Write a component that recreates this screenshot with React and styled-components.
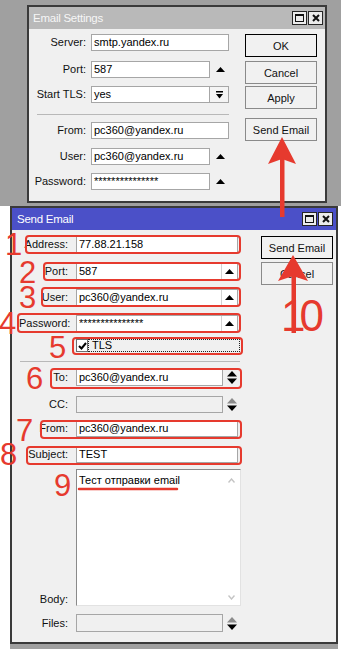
import React from "react";
import styled, { createGlobalStyle } from "styled-components";

const RED = "#e63a2e";

const GlobalStyle = createGlobalStyle`
  html, body { margin: 0; padding: 0; background: #ffffff; }
  body { font-family: "Liberation Sans", Arial, sans-serif; font-size: 11px; color: #000; }
`;

const Page = styled.div`
  position: relative;
  width: 341px;
  height: 649px;
  overflow: hidden;
  background: #ffffff;
  display: flex;
  flex-direction: column;
`;

const Desktop = styled.div`
  flex: none;
  height: 206px;
  box-sizing: border-box;
  background: #a0a0a0;
  padding: 5px 0 0 27px;
`;

const Window = styled.div`
  box-sizing: border-box;
  flex: none;
  width: ${(p) => p.$w}px;
  height: ${(p) => p.$h}px;
  margin-left: ${(p) => p.$ml || 0}px;
  border: 2px solid #3a3a3a;
  background: #f0f0f0;
  display: flex;
  flex-direction: column;
`;

const TitleBar = styled.div`
  flex: none;
  height: 22px;
  display: flex;
  align-items: center;
  padding: 0 ${(p) => p.$pr}px 0 ${(p) => p.$pl}px;
  background: ${(p) => (p.$active ? "#4b50c8" : "#b9b9b9")};
  color: ${(p) => (p.$active ? "#ffffff" : "#f6f6f6")};
  font-size: 11.5px;
  letter-spacing: -0.25px;
`;

const TitleText = styled.span`
  white-space: nowrap;
`;

const TitleButtons = styled.div`
  margin-left: auto;
  display: flex;
  gap: 1px;
`;

const TitleButton = styled.div`
  width: 15px;
  height: 14px;
  box-sizing: border-box;
  border: 1px solid #262626;
  background: #ececec;
  display: flex;
  align-items: center;
  justify-content: center;
`;

const MaxGlyph = styled.span`
  width: 9px;
  height: 8px;
  box-sizing: border-box;
  border: 1px solid #111;
  border-top-width: 2px;
`;

const Body = styled.div`
  flex: 1;
  display: flex;
  align-items: flex-start;
  padding: ${(p) => p.$pad};
`;

const Form = styled.div`
  display: flex;
  flex-direction: column;
  --label-w: ${(p) => p.$lw}px;
  --label-gap: ${(p) => p.$lg}px;
`;

const Row = styled.div`
  display: flex;
  align-items: ${(p) => (p.$bottom ? "flex-end" : "center")};
  min-height: ${(p) => p.$minh || 0}px;
  margin-top: ${(p) => p.$mt}px;
`;

const Label = styled.div`
  flex: none;
  width: var(--label-w);
  margin-right: var(--label-gap);
  text-align: right;
  white-space: nowrap;
  line-height: 13px;
  color: #111;
`;

const Field = styled.div`
  box-sizing: border-box;
  flex: none;
  width: ${(p) => p.$w}px;
  height: ${(p) => p.$h || 17}px;
  border: 1px solid #a6a6a6;
  background: ${(p) => (p.$disabled ? "#f0f0f0" : "#ffffff")};
  padding-left: 2px;
  line-height: ${(p) => (p.$h || 17) - 2}px;
  white-space: nowrap;
  overflow: hidden;
  display: flex;
`;

const FieldText = styled.span`
  flex: 1;
  overflow: hidden;
`;

const InnerSpin = styled.div`
  flex: none;
  width: 15px;
  border-left: 1px solid #d2d2d2;
  display: flex;
  align-items: center;
  justify-content: center;
`;

const OuterSpin = styled.div`
  flex: none;
  width: ${(p) => p.$w}px;
  padding-left: ${(p) => p.$pl || 0}px;
  box-sizing: border-box;
  display: flex;
  align-items: center;
  justify-content: center;
`;

const DropButton = styled.div`
  box-sizing: border-box;
  flex: none;
  width: 19px;
  height: 17px;
  border: 1px solid #a6a6a6;
  border-left: none;
  background: #f4f4f4;
  display: flex;
  align-items: center;
  justify-content: center;
`;

const Separator = styled.div`
  margin-top: ${(p) => p.$mt}px;
  margin-left: ${(p) => p.$ml}px;
  width: ${(p) => p.$w}px;
  height: 0;
  border-top: 1px solid #b8b8b8;
`;

const Buttons = styled.div`
  flex: none;
  display: flex;
  flex-direction: column;
  margin-left: ${(p) => p.$ml}px;
`;

const Button = styled.div`
  box-sizing: border-box;
  width: 72px;
  height: 23px;
  margin-top: ${(p) => p.$mt}px;
  border: 1px solid ${(p) => (p.$default ? "#000000" : "#8a8a8a")};
  background: #f1f1f1;
  display: flex;
  align-items: center;
  justify-content: center;
  font-size: 11px;
  color: #111;
`;

const Check = styled.div`
  box-sizing: border-box;
  flex: none;
  width: 12px;
  height: 13px;
  border: 1px solid #6e6e6e;
  background: #ffffff;
  display: flex;
  align-items: center;
  justify-content: center;
`;

const FocusLabel = styled.div`
  box-sizing: border-box;
  width: 152px;
  height: 13px;
  border: 1px dotted #222;
  padding-left: 3px;
  line-height: 11px;
`;

const TextArea = styled.div`
  box-sizing: border-box;
  flex: none;
  width: 165px;
  height: 137px;
  border-top: 1px solid #8a8a8a;
  border-left: 1px solid #8a8a8a;
  border-right: 1px solid #e2e2e2;
  border-bottom: 1px solid #e2e2e2;
  background: #ffffff;
  display: flex;
`;

const TextContent = styled.div`
  flex: 1;
  padding: 4px 0 0 2px;
  line-height: 13px;
`;

const ScrollTrack = styled.div`
  flex: none;
  width: 17px;
  display: flex;
  flex-direction: column;
  align-items: center;
  justify-content: space-between;
  padding: 8px 0 5px;
`;

const ShadeStrip = styled.div`
  flex: none;
  margin-left: 10px;
  width: 328px;
  height: 5px;
  background: #a0a0a0;
`;

/* annotation layer (drawn over the screenshot) */
const Overlay = styled.div`
  position: absolute;
  inset: 0;
  pointer-events: none;
`;

const Mark = styled.div`
  position: absolute;
  left: ${(p) => p.$x}px;
  top: ${(p) => p.$y}px;
  width: ${(p) => p.$w}px;
  height: ${(p) => p.$h}px;
  box-sizing: border-box;
  border: 2.5px solid ${RED};
  border-radius: 4px;
`;

const Digit = styled.span`
  position: absolute;
  left: ${(p) => p.$x}px;
  top: ${(p) => p.$y}px;
  font-family: "Liberation Sans", Arial, sans-serif;
  font-size: ${(p) => p.$size || 31}px;
  letter-spacing: ${(p) => p.$ls || 0}px;
  line-height: ${(p) => p.$lh || 22}px;
  color: ${RED};
`;

const ArrowLayer = styled.svg`
  position: absolute;
  left: 0;
  top: 0;
`;

const Up = () => (
  <svg width="9" height="5" viewBox="0 0 9 5">
    <polygon points="0,5 4.5,0 9,5" fill="#000" />
  </svg>
);

const DropIcon = () => (
  <svg width="7" height="8" viewBox="0 0 7 8">
    <rect x="0" y="0" width="7" height="1.5" fill="#000" />
    <polygon points="0,3 7,3 3.5,7.5" fill="#000" />
  </svg>
);

const UpDown = ({ muted }) => (
  <svg width="10" height="13" viewBox="0 0 10 13">
    <polygon points="0,5.5 5,0 10,5.5" fill={muted ? "#8c8c8c" : "#000"} />
    <polygon points="0,7.5 10,7.5 5,13" fill="#000" />
  </svg>
);

const Chevron = ({ down }) => (
  <svg width="7" height="5" viewBox="0 0 7 5">
    <polyline
      points={down ? "0.5,0.5 3.5,4 6.5,0.5" : "0.5,4.5 3.5,1 6.5,4.5"}
      fill="none"
      stroke="#c4c4c4"
      strokeWidth="1.4"
    />
  </svg>
);

const CheckMark = () => (
  <svg width="9" height="8" viewBox="0 0 9 8">
    <polyline points="1,4 3.5,6.5 8,1" fill="none" stroke="#000" strokeWidth="2" />
  </svg>
);

const CloseGlyph = () => (
  <svg width="8" height="8" viewBox="0 0 8 8">
    <path d="M1 1 L7 7 M7 1 L1 7" stroke="#111" strokeWidth="2" />
  </svg>
);

const WinButtons = () => (
  <TitleButtons>
    <TitleButton>
      <MaxGlyph />
    </TitleButton>
    <TitleButton>
      <CloseGlyph />
    </TitleButton>
  </TitleButtons>
);

export default function App() {
  return (
    <Page>
      <GlobalStyle />
      <Desktop>
        <Window $w={300} $h={198}>
          <TitleBar $pl={4} $pr={2}>
            <TitleText>Email Settings</TitleText>
            <WinButtons />
          </TitleBar>
          <Body $pad="0 0 0 4px">
            <Form $lw={53} $lg={5}>
              <Row $mt={5}>
                <Label>Server:</Label>
                <Field $w={138}>smtp.yandex.ru</Field>
              </Row>
              <Row $mt={10}>
                <Label>Port:</Label>
                <Field $w={119}>587</Field>
                <OuterSpin $w={19} $pl={2}>
                  <Up />
                </OuterSpin>
              </Row>
              <Row $mt={8}>
                <Label>Start TLS:</Label>
                <Field $w={119}>yes</Field>
                <DropButton>
                  <DropIcon />
                </DropButton>
              </Row>
              <Separator $mt={11} $ml={4} $w={192} />
              <Row $mt={7}>
                <Label>From:</Label>
                <Field $w={138}>pc360@yandex.ru</Field>
              </Row>
              <Row $mt={9}>
                <Label>User:</Label>
                <Field $w={119}>pc360@yandex.ru</Field>
                <OuterSpin $w={19} $pl={2}>
                  <Up />
                </OuterSpin>
              </Row>
              <Row $mt={8}>
                <Label>Password:</Label>
                <Field $w={119}>***************</Field>
                <OuterSpin $w={19} $pl={2}>
                  <Up />
                </OuterSpin>
              </Row>
            </Form>
            <Buttons $ml={16}>
              <Button $mt={5} $default>OK</Button>
              <Button $mt={4}>Cancel</Button>
              <Button $mt={2}>Apply</Button>
              <Button $mt={9}>Send Email</Button>
            </Buttons>
          </Body>
        </Window>
      </Desktop>

      <Window $w={328} $h={438} $ml={10}>
        <TitleBar $active $pl={5} $pr={3}>
          <TitleText>Send Email</TitleText>
          <WinButtons />
        </TitleBar>
        <Body $pad="0 0 0 7px">
          <Form $lw={49} $lg={8}>
            <Row $mt={6}>
              <Label>Address:</Label>
              <Field $w={162}>77.88.21.158</Field>
            </Row>
            <Row $mt={10}>
              <Label>Port:</Label>
              <Field $w={162}>
                <FieldText>587</FieldText>
                <InnerSpin>
                  <Up />
                </InnerSpin>
              </Field>
            </Row>
            <Row $mt={9}>
              <Label>User:</Label>
              <Field $w={162}>
                <FieldText>pc360@yandex.ru</FieldText>
                <InnerSpin>
                  <Up />
                </InnerSpin>
              </Field>
            </Row>
            <Row $mt={9}>
              <Label>Password:</Label>
              <Field $w={162}>
                <FieldText>***************</FieldText>
                <InnerSpin>
                  <Up />
                </InnerSpin>
              </Field>
            </Row>
            <Row $mt={5} $minh={17}>
              <Label />
              <Check>
                <CheckMark />
              </Check>
              <FocusLabel>TLS</FocusLabel>
            </Row>
            <Separator $mt={7} $ml={1} $w={220} />
            <Row $mt={7}>
              <Label>To:</Label>
              <Field $w={147}>pc360@yandex.ru</Field>
              <OuterSpin $w={15} $pl={3}>
                <UpDown />
              </OuterSpin>
            </Row>
            <Row $mt={10}>
              <Label>CC:</Label>
              <Field $w={147} $disabled />
              <OuterSpin $w={15} $pl={3}>
                <UpDown muted />
              </OuterSpin>
            </Row>
            <Row $mt={7}>
              <Label>From:</Label>
              <Field $w={162}>pc360@yandex.ru</Field>
            </Row>
            <Row $mt={9}>
              <Label>Subject:</Label>
              <Field $w={162}>TEST</Field>
            </Row>
            <Row $mt={6} $bottom>
              <Label>Body:</Label>
              <TextArea>
                <TextContent>Тест отправки email</TextContent>
                <ScrollTrack>
                  <Chevron />
                  <Chevron down />
                </ScrollTrack>
              </TextArea>
            </Row>
            <Row $mt={8}>
              <Label>Files:</Label>
              <Field $w={147} $h={18} $disabled />
              <OuterSpin $w={15} $pl={3}>
                <UpDown muted />
              </OuterSpin>
            </Row>
          </Form>
          <Buttons $ml={20}>
            <Button $mt={6} $default>Send Email</Button>
            <Button $mt={3}>Cancel</Button>
          </Buttons>
        </Body>
      </Window>
      <ShadeStrip />

      <Overlay>
        <Mark $x={25} $y={235} $w={216} $h={19} />
        <Mark $x={43} $y={262} $w={198} $h={19} />
        <Mark $x={41} $y={287} $w={200} $h={20} />
        <Mark $x={17} $y={313} $w={224} $h={20} />
        <Mark $x={72} $y={337} $w={171} $h={18} />
        <Mark $x={50} $y={368} $w={192} $h={21} />
        <Mark $x={40} $y={420} $w={202} $h={19} />
        <Mark $x={26} $y={446} $w={216} $h={19} />

        <Digit $x={5} $y={234}>1</Digit>
        <Digit $x={19} $y={262}>2</Digit>
        <Digit $x={19} $y={287}>3</Digit>
        <Digit $x={-1} $y={313}>4</Digit>
        <Digit $x={49} $y={337}>5</Digit>
        <Digit $x={26} $y={368}>6</Digit>
        <Digit $x={16} $y={420}>7</Digit>
        <Digit $x={0} $y={444}>8</Digit>
        <Digit $x={54} $y={475}>9</Digit>
        <Digit $x={281} $y={300} $size={44} $lh={32} $ls={-6}>10</Digit>

        <ArrowLayer width="341" height="649" viewBox="0 0 341 649">
          <polygon points="282,137 296,164 282,159 268,164" fill={RED} />
          <rect x="280" y="158" width="4.5" height="59" fill={RED} />
          <polygon points="293,255 308,281 293,276 278,281" fill={RED} />
          <rect x="291.5" y="276" width="4.5" height="57" fill={RED} />
          <line x1="79" y1="489" x2="177" y2="489" stroke={RED} strokeWidth="2.5" strokeLinecap="round" />
        </ArrowLayer>
      </Overlay>
    </Page>
  );
}
